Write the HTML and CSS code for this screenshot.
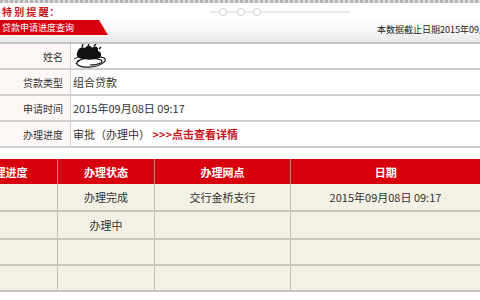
FILE: index.html
```html
<!DOCTYPE html>
<html lang="zh-CN">
<head>
    <meta charset="UTF-8">
    <title>贷款申请进度查询</title>
    <link rel="stylesheet" href="styles.css">
</head>
<body>
    <div class="topline"></div>
    <div class="notice">
        <span class="notice-title">特 别 提 醒：</span>
        <svg class="notice-deco" width="140" height="10" viewBox="0 0 140 10">
            <line x1="0" y1="5" x2="140" y2="5" stroke="#d6d6d6" stroke-width="1"/>
            <circle cx="13" cy="5" r="3.5" fill="#fff" stroke="#cfcfcf"/>
            <circle cx="31" cy="5" r="3.5" fill="#fff" stroke="#cfcfcf"/>
            <circle cx="47" cy="5" r="3.5" fill="#fff" stroke="#cfcfcf"/>
        </svg>
    </div>
    <div class="titlebar">
        <div class="tab">贷款申请进度查询</div>
        <div class="cutoff">本数据截止日期2015年09月08日</div>
    </div>

    <table class="info">
        <tr>
            <th>姓名</th>
            <td>
                <svg class="scribble" width="34" height="24" viewBox="0 0 34 24">
                    <path d="M4 9 C5 4 9 2 12 4 C14 1 18 1 19 4 C22 1 26 3 25 7 C29 8 29 12 26 14 C22 16 14 16 9 15 C5 14 3 12 4 9 Z" fill="#111"/>
                    <path d="M9 3 L10 0 M15 2 L16 0 M21 2 L23 0 M26 5 L28 3" stroke="#111" stroke-width="1.4"/>
                    <path d="M3 20 C7 13 23 11 31 14 C35 16 29 22 18 23 C8 24 1 21 5 17 C9 14 21 13 28 16 C31 18 26 21 17 21" fill="none" stroke="#111" stroke-width="1.2"/>
                    <path d="M1 15 C8 11 20 9 27 11" fill="none" stroke="#111" stroke-width="1"/>
                </svg>
            </td>
        </tr>
        <tr>
            <th>贷款类型</th>
            <td>组合贷款</td>
        </tr>
        <tr>
            <th>申请时间</th>
            <td>2015年09月08日 09:17</td>
        </tr>
        <tr>
            <th>办理进度</th>
            <td>审批（办理中） <a class="detail-link" href="#">&gt;&gt;&gt;点击查看详情</a></td>
        </tr>
    </table>

    <table class="progress">
        <colgroup>
            <col class="col-step">
            <col class="col-status">
            <col class="col-branch">
            <col class="col-date">
        </colgroup>
        <tr class="head">
            <th>办理进度</th>
            <th>办理状态</th>
            <th>办理网点</th>
            <th>日期</th>
        </tr>
        <tr class="row-a">
            <td></td>
            <td>办理完成</td>
            <td>交行金桥支行</td>
            <td>2015年09月08日 09:17</td>
        </tr>
        <tr class="row-a">
            <td></td>
            <td>办理中</td>
            <td></td>
            <td></td>
        </tr>
        <tr class="row-b">
            <td></td>
            <td></td>
            <td></td>
            <td></td>
        </tr>
        <tr class="row-b">
            <td></td>
            <td></td>
            <td></td>
            <td></td>
        </tr>
    </table>
</body>
</html>
```

FILE: styles.css
```css
body {
    margin: 0;
    width: 480px;
    height: 300px;
    overflow: hidden;
    background-color: #fff;
    font-family: "Noto Sans CJK SC", "Microsoft YaHei", sans-serif;
    font-size: 11px;
    color: #333;
}
.topline {
    height: 3px;
    background: repeating-linear-gradient(90deg, #b5b5b5 0 3px, #dcdcdc 3px 5px);
}
.notice {
    height: 17px;
    display: flex;
    align-items: center;
}
.notice-title {
    color: #c8161d;
    font-size: 10px;
    font-weight: bold;
    letter-spacing: 0.5px;
    word-spacing: -1px;
    padding-left: 2px;
    width: 208px;
    white-space: nowrap;
}
.notice-deco {
    display: block;
}
.titlebar {
    height: 22px;
    display: flex;
    align-items: flex-start;
    background: linear-gradient(#fff 0%, #f6f6f6 50%, #e8e8e8 100%);
    border-bottom: 2px solid #c4c4c4;
    white-space: nowrap;
}
.tab {
    height: 15px;
    line-height: 15px;
    width: 106px;
    padding-left: 2px;
    background-color: #d7000f;
    color: #fff;
    font-size: 9px;
    clip-path: polygon(0 0, 99px 0, 108px 15px, 0 15px);
}
.cutoff {
    margin-left: auto;
    width: 103px;
    padding-top: 3px;
    font-size: 9px;
    color: #222;
}
.info {
    width: 480px;
    border-collapse: collapse;
}
.info th,
.info td {
    height: 24px;
    border-bottom: 2px solid #cfcfcf;
    font-weight: normal;
    white-space: nowrap;
}
.info th {
    width: 63px;
    padding: 0 7px 0 0;
    text-align: right;
    font-size: 10px;
    background-color: #fdf8f6;
    border-right: 1px solid #cfcfcf;
}
.info td {
    padding: 0 0 0 2px;
    text-align: left;
}
.scribble {
    display: block;
}
.detail-link {
    color: #c8161d;
    font-weight: bold;
    text-decoration: none;
}
.progress {
    margin-top: 11px;
    margin-left: -47px;
    width: 527px;
    border-collapse: collapse;
    table-layout: fixed;
}
.col-step { width: 104px; }
.col-status { width: 97px; }
.col-branch { width: 136px; }
.col-date { width: 190px; }
.progress th,
.progress td {
    text-align: center;
    padding: 0;
    white-space: nowrap;
}
.progress .head th {
    height: 25px;
    background-color: #d7000f;
    color: #fff;
    font-weight: bold;
    border-left: 1px solid #e5727a;
}
.progress td {
    background-color: #f3f0e5;
    border: 1px solid #c2beb4;
    border-top: none;
    border-bottom: 2px solid #c9c5bb;
}
.progress .row-a td {
    height: 26px;
}
.progress .row-b td {
    height: 24px;
}
```
